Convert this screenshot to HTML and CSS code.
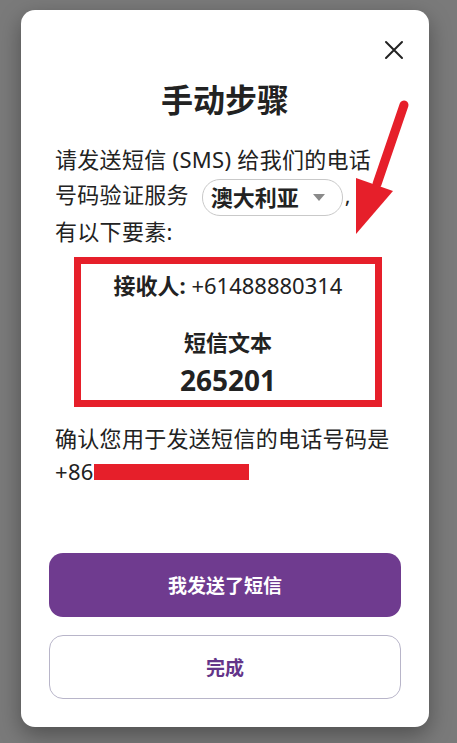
FILE: index.html
```html
<!DOCTYPE html>
<html>
  <head>
    <title>手动步骤</title>
    <meta charset="UTF-8">
    <meta name="viewport" content="width=device-width, initial-scale=1.0">
    <link rel="stylesheet" href="styles.css">
  </head>
  <body>

<!-- Dialog -->
<div class="modal">
  <div class="modalHead">
    <svg class="closeIcon" width="20" height="20" viewBox="0 0 20 20">
      <path d="M2 2 L18 18 M18 2 L2 18" stroke="#222" stroke-width="2" stroke-linecap="round" fill="none"/>
    </svg>
  </div>
  <p class="title">手动步骤</p>
  <p class="text">请发送短信 (SMS) 给我们的电话<br>号码验证服务<span class="pill"><b>澳大利亚</b><span class="caret"></span></span>,<br>有以下要素:</p>

  <div class="smsBox">
    <p class="recipient"><b>接收人:</b> +61488880314</p>
    <p class="smsLabel">短信文本</p>
    <p class="smsCode">265201</p>
  </div>

  <p class="text confirm">确认您用于发送短信的电话号码是<br>+86<span class="redacted"></span></p>

  <div class="buttons">
    <div class="btn btnPrimary">我发送了短信</div>
    <div class="btn btnOutline">完成</div>
  </div>
</div>

<!-- red arrow drawn on the screenshot -->
<svg class="arrow" width="457" height="743" viewBox="0 0 457 743">
  <path d="M404 105 L377 184" stroke="#e61f2a" stroke-width="9" stroke-linecap="round" fill="none"/>
  <polygon points="356,178 393,191 356,234" fill="#e61f2a"/>
</svg>

  </body>
</html>
```

FILE: styles.css
```css
body{
margin: 0;
height: 743px;
background-color: #7a7a7a;
font-family: "Noto Sans", "Noto Sans CJK SC", sans-serif;
color: #222;
overflow: hidden;
}

p{
margin: 0;
}

.modal{
width: 408px;
height: 717px;
margin: 10px 0 0 21px;
background-color: white;
border-radius: 14px;
box-shadow: 0 8px 22px rgba(0, 0, 0, .35);
display: flex;
flex-direction: column;
box-sizing: border-box;
padding-bottom: 28px;
}

.modalHead{
display: flex;
justify-content: flex-end;
padding: 30px 25px 0 0;
height: 20px;
}

.title{
margin-top: 20px;
font-size: 32px;
line-height: 40px;
font-weight: bold;
text-align: center;
}

.text{
margin: 22px 0 0 34px;
font-size: 22px;
line-height: 35px;
letter-spacing: 0.3px;
}

.pill{
display: inline-flex;
align-items: center;
height: 35px;
margin: -2px 2px -2px 13px;
padding: 0 17px 0 8px;
border: 1px solid #c9c9c9;
border-radius: 18px;
vertical-align: middle;
letter-spacing: 0;
}

.caret{
margin-left: 14px;
border-left: 6px solid transparent;
border-right: 6px solid transparent;
border-top: 7px solid #8a8a8a;
}

.smsBox{
width: 308px;
box-sizing: border-box;
margin: 8px 0 0 53px;
border: 7px solid #e61f2a;
padding: 6px 0 2px 0;
text-align: center;
}

.recipient{
font-size: 22px;
line-height: 30px;
}

.smsLabel{
margin-top: 27px;
font-size: 22px;
line-height: 30px;
font-weight: bold;
}

.smsCode{
margin-top: 5px;
font-size: 28px;
line-height: 36px;
font-weight: bold;
}

.confirm{
margin-top: 15px;
line-height: 33px;
}

.redacted{
display: inline-block;
width: 155px;
height: 16px;
background-color: #e61f2a;
}

.buttons{
margin: auto 28px 0 28px;
display: flex;
flex-direction: column;
gap: 18px;
}

.btn{
height: 64px;
box-sizing: border-box;
border-radius: 14px;
display: flex;
align-items: center;
justify-content: center;
font-size: 19px;
font-weight: bold;
}

.btnPrimary{
background-color: #6f3b8f;
color: white;
}

.btnOutline{
border: 1.5px solid #b8b5c9;
color: #633489;
}

.arrow{
position: absolute;
top: 0;
left: 0;
pointer-events: none;
}
```
